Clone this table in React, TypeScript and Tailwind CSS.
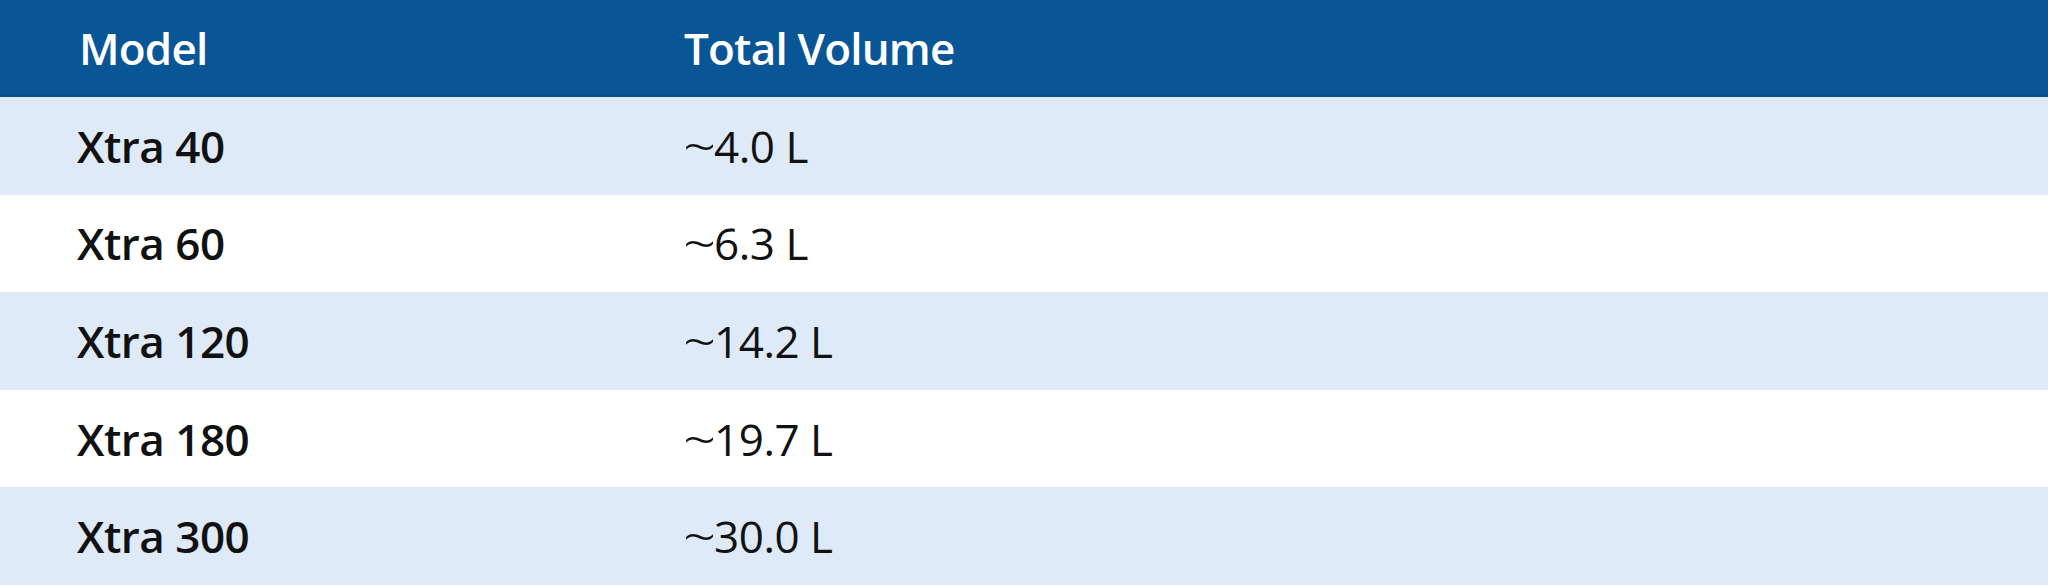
import React from "react";

const rows = [
  { model: "Xtra 40", vol: "4.0 L" },
  { model: "Xtra 60", vol: "6.3 L" },
  { model: "Xtra 120", vol: "14.2 L" },
  { model: "Xtra 180", vol: "19.7 L" },
  { model: "Xtra 300", vol: "30.0 L" },
];

export default function App() {
  return (
    <div
      className="w-[2048px] h-[585px] bg-white flex flex-col"
      style={{ fontFamily: '"Open Sans", "Noto Sans", sans-serif' }}
    >
      <div className="grid grid-cols-[606px_1fr] h-[97px] bg-[#095696] border-b-2 border-[#084d88] items-center text-white font-semibold text-[44px] tracking-[-0.8px]">
        <div className="pl-[79px]">Model</div>
        <div className="pl-[78px]">Total Volume</div>
      </div>
      {rows.map((r, i) => (
        <div
          key={r.model}
          className={
            "grid grid-cols-[606px_1fr] h-[97.6px] items-center text-[44px] text-[#111111] " +
            (i % 2 === 0 ? "bg-[#deeaf7]" : "bg-white")
          }
        >
          <div className="pl-[77px] font-semibold tracking-[-0.5px]">{r.model}</div>
          <div className="pl-[77px] font-normal tracking-[-0.5px]">
            <span className="text-[58px] font-light leading-none align-[-5px] tracking-[-2px]">~</span>
            {r.vol}
          </div>
        </div>
      ))}
    </div>
  );
}
